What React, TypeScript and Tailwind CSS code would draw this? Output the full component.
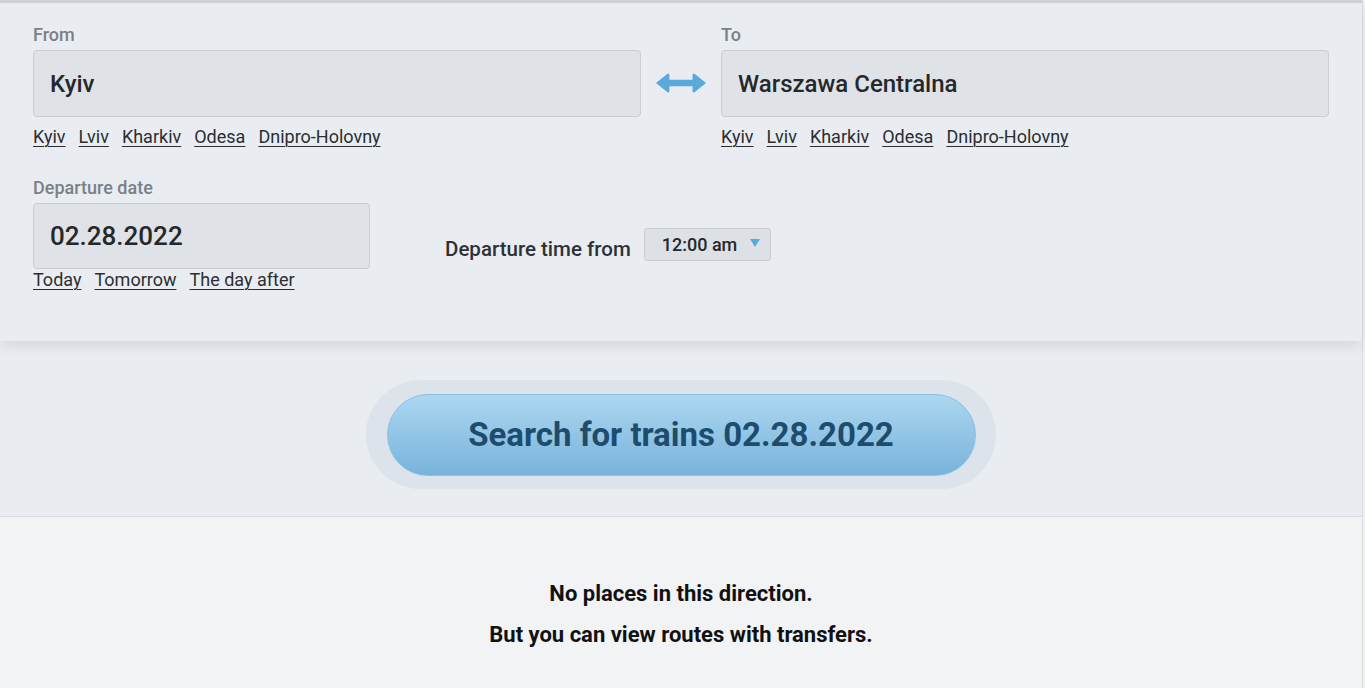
import React from 'react';

const cities = ['Kyiv', 'Lviv', 'Kharkiv', 'Odesa', 'Dnipro-Holovny'];

const QuickLinks = ({ items, className }: { items: string[]; className: string }) => (
  <div className={`flex gap-[13px] text-[18px] leading-[22px] text-[#2b2e31] ${className}`}>
    {items.map(item => (
      <a key={item} className="underline underline-offset-[3px] decoration-1 cursor-pointer">
        {item}
      </a>
    ))}
  </div>
);

const StationField = ({ label, value }: { label: string; value: string }) => (
  <div className="flex flex-col w-[608px]">
    <span className="text-[18px] leading-[22px] font-medium text-[#7b8086] mb-[4px]">{label}</span>
    <div className="h-[67px] flex items-center px-[16px] bg-[#dfe2e6] border border-[#c9cdd2] rounded-[4px] text-[24px] font-medium text-[#25282b]">
      {value}
    </div>
    <QuickLinks items={cities} className="mt-[9px]" />
  </div>
);

const SwapArrow = () => (
  <svg width="52" height="22" viewBox="0 0 54 22" className="mt-[48px]">
    <path d="M1 11 L13 1.5 Q15 0.5 15 3 L15 7.5 L39 7.5 L39 3 Q39 0.5 41 1.5 L53 11 L41 20.5 Q39 21.5 39 19 L39 14.5 L15 14.5 L15 19 Q15 21.5 13 20.5 Z" fill="#5aa9dc" />
  </svg>
);

export default function App() {
  return (
    <div className="w-[1365px] h-[688px] overflow-hidden bg-[#eef1f4]" style={{ fontFamily: 'Roboto, "Liberation Sans", sans-serif' }}>
      <div className="w-[1363px] h-full border-r border-[#d9dde2] bg-[#e9ecf0] flex flex-col">
        {/* search form */}
        <div className="border-t-[3px] border-[#cdd1d6] bg-[#e9edf1] shadow-[0_6px_12px_rgba(0,0,0,0.08)] h-[341px] px-[33px] pt-[21px] relative z-10">
          <div className="flex items-start gap-[14px]">
            <StationField label="From" value="Kyiv" />
            <SwapArrow />
            <StationField label="To" value="Warszawa Centralna" />
          </div>
          <div className="flex items-start mt-[29px]">
            <div className="flex flex-col w-[337px]">
              <span className="text-[18px] leading-[22px] font-medium text-[#7b8086] mb-[4px]">Departure date</span>
              <div className="h-[66px] flex items-center px-[16px] bg-[#dfe2e6] border border-[#c9cdd2] rounded-[4px] text-[26px] font-medium text-[#25282b]">
                02.28.2022
              </div>
              <QuickLinks items={['Today', 'Tomorrow', 'The day after']} className="mt-0" />
            </div>
            <div className="flex items-center ml-[75px] mt-[48px]">
              <span className="text-[20.5px] font-medium text-[#2e3134] mt-[9px]">Departure time from</span>
              <div className="ml-[13px] w-[127px] h-[33px] flex items-center justify-between pl-[17px] pr-[10px] bg-[#dde1e6] border border-[#c9cdd2] rounded-[3px] text-[18px] font-medium text-[#25282b]">
                <span>12:00 am</span>
                <svg width="10" height="8" viewBox="0 0 10 8" className="mb-[4px]">
                  <path d="M0 0 L10 0 L5 8 Z" fill="#5aa9dc" />
                </svg>
              </div>
            </div>
          </div>
        </div>

        {/* search button */}
        <div className="h-[175px] flex items-center justify-center">
          <div className="w-[630px] h-[109px] rounded-full bg-[#dce3ea] flex items-center justify-center mt-[12px]">
            <button className="w-[589px] h-[82px] rounded-full border border-[#8cc0e3] bg-gradient-to-b from-[#acd7f0] to-[#78b3db] text-[#1d4c6c] text-[33px] font-bold">
              Search for trains 02.28.2022
            </button>
          </div>
        </div>

        {/* result */}
        <div className="flex-1 border-t border-[#d6dbe0] bg-[#f1f3f5] flex flex-col items-center pt-[60px] gap-[8px] text-[22px] font-bold text-[#111]">
          <p>No places in this direction.</p>
          <p>But you can view routes with transfers.</p>
        </div>
      </div>
    </div>
  );
}
